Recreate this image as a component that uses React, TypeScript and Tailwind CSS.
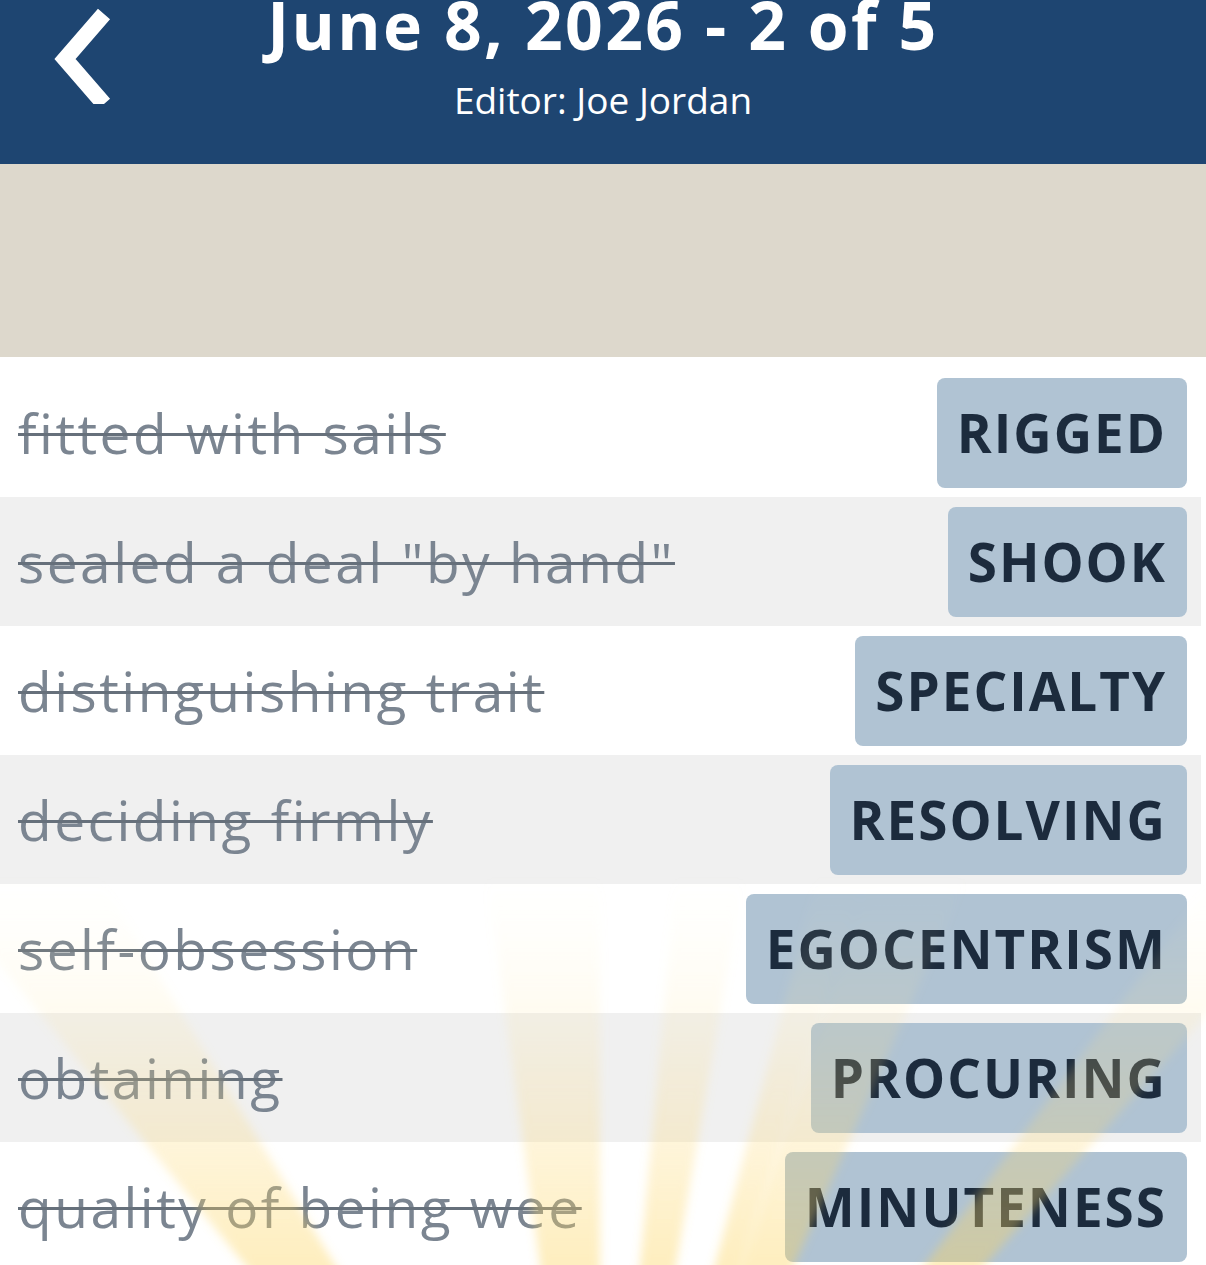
import React from 'react';

const rows = [
  { clue: 'fitted with sails', answer: 'RIGGED' },
  { clue: 'sealed a deal "by hand"', answer: 'SHOOK' },
  { clue: 'distinguishing trait', answer: 'SPECIALTY' },
  { clue: 'deciding firmly', answer: 'RESOLVING' },
  { clue: 'self-obsession', answer: 'EGOCENTRISM' },
  { clue: 'obtaining', answer: 'PROCURING' },
  { clue: 'quality of being wee', answer: 'MINUTENESS' },
];

// sun rays behind the bottom rows; xb = ray centre where it crosses the page bottom
const TOP = 357;
const CX = 600;
const CY = 1700 - TOP;
const YB = 1265 - TOP;
const rays = [
  { xb: 290, w: 90 },
  { xb: 570, w: 60 },
  { xb: 658, w: 36 },
  { xb: 728, w: 26 },
  { xb: 768, w: 52 },
  { xb: 955, w: 60 },
];

const Rays: React.FC = () => {
  const reach = (x: number, y: number) => CX + (x - CX) * ((CY - y) / (CY - YB));
  const far = 420;
  return (
    <svg
      className="pointer-events-none absolute left-0 top-0"
      width="1206"
      height="914"
      viewBox="0 0 1206 914"
    >
      <defs>
        <linearGradient id="ray" gradientUnits="userSpaceOnUse" x1="0" y1="914" x2="0" y2="520">
          <stop offset="0" stopColor="#fcd35a" stopOpacity="0.4" />
          <stop offset="0.5" stopColor="#fcdc80" stopOpacity="0.2" />
          <stop offset="1" stopColor="#fff0c0" stopOpacity="0" />
        </linearGradient>
        <filter id="soft" x="-20%" y="-20%" width="140%" height="140%">
          <feGaussianBlur stdDeviation="5" />
        </filter>
      </defs>
      <g filter="url(#soft)">
        {rays.map((r, i) => {
          const a = reach(r.xb - r.w / 2, far);
          const b = reach(r.xb + r.w / 2, far);
          return <polygon key={i} points={`${CX},${CY} ${a},${far} ${b},${far}`} fill="url(#ray)" />;
        })}
      </g>
    </svg>
  );
};

export default function App() {
  return (
    <div className="h-[1265px] w-full overflow-hidden bg-white font-['Open_Sans',sans-serif]">
      {/* Header */}
      <div className="relative flex h-[164px] flex-col items-center bg-[#1e4571] text-white">
        <button className="absolute left-[48px] top-[4px]">
          <svg width="70" height="100" viewBox="0 0 70 100">
            <polyline
              points="56,10 17,55 56,100"
              fill="none"
              stroke="white"
              strokeWidth="16"
              strokeLinejoin="miter"
            />
          </svg>
        </button>
        <h1 className="mt-[-9px] text-[66px] font-bold leading-none tracking-[2.4px]">
          June 8, 2026 - 2 of 5
        </h1>
        <p className="mt-[24px] text-[37px] leading-none">Editor: Joe Jordan</p>
      </div>

      {/* Spacer band */}
      <div className="h-[193px] bg-[#ddd8cc]" />

      {/* Answer list */}
      <div className="relative pr-[5px] pt-[11px]">
        {rows.map((row, i) => (
          <div
            key={i}
            className={`flex h-[129px] items-center justify-between pl-[18px] pr-[14px] ${
              i % 2 === 1 ? 'bg-[#f0f0f0]' : 'bg-white'
            }`}
          >
            <span className="text-[55px] leading-none tracking-[2.5px] text-[#7b8591] line-through decoration-[3px] decoration-[#66707b]">
              {row.clue}
            </span>
            <span className="flex h-[110px] items-center rounded-lg bg-[#b0c3d3] px-[20px] text-[53px] font-bold leading-none tracking-[2px] text-[#1c2b3d]">
              {row.answer}
            </span>
          </div>
        ))}
        <Rays />
      </div>
    </div>
  );
}
